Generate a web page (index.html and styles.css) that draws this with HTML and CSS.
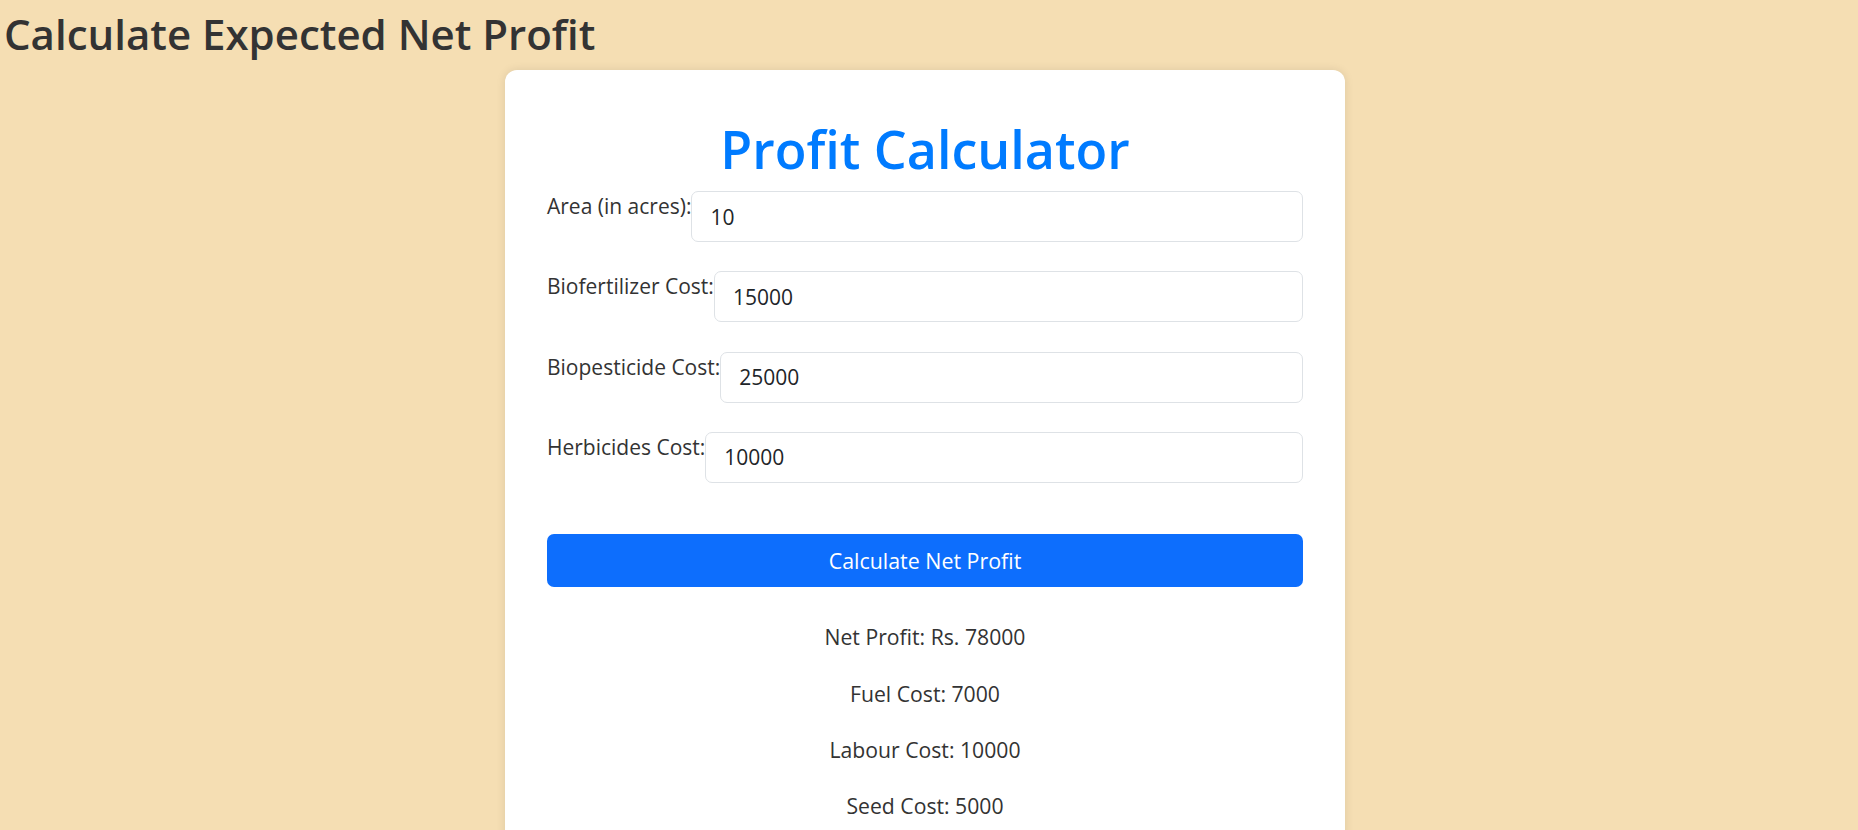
FILE: index.html
```html
<!DOCTYPE html>
<html lang="en">
<head>
<meta charset="utf-8">
<title>Calculate Expected Net Profit</title>
<link rel="stylesheet" href="styles.css">
</head>
<body>
<div class="page">
  <h1 class="page-title">Calculate Expected Net Profit</h1>
  <div class="card">
    <h2 class="card-title">Profit Calculator</h2>
    <form class="calc-form">
      <div class="field">
        <label class="field-label" for="area">Area (in acres):</label>
        <input class="field-input" id="area" type="text" value="10">
      </div>
      <div class="field">
        <label class="field-label" for="bioF">Biofertilizer Cost:</label>
        <input class="field-input" id="bioF" type="text" value="15000">
      </div>
      <div class="field">
        <label class="field-label" for="bioP">Biopesticide Cost:</label>
        <input class="field-input" id="bioP" type="text" value="25000">
      </div>
      <div class="field">
        <label class="field-label" for="herb">Herbicides Cost:</label>
        <input class="field-input" id="herb" type="text" value="10000">
      </div>
      <button class="calc-btn" type="button">Calculate Net Profit</button>
    </form>
    <div class="results">
      <p class="result">Net Profit: Rs. 78000</p>
      <p class="result">Fuel Cost: 7000</p>
      <p class="result">Labour Cost: 10000</p>
      <p class="result">Seed Cost: 5000</p>
    </div>
  </div>
</div>
</body>
</html>
```

FILE: styles.css
```css
html, body {
  margin: 0;
  padding: 0;
  overflow: hidden;
}

body {
  background: #f5deb3;
  font-family: "Open Sans", "Noto Sans", sans-serif;
  color: #333333;
}

.page {
  padding-right: 8px;
}

.page-title {
  margin: 9px 0 11px 4px;
  font-size: 42px;
  line-height: 1.2;
  font-weight: 600;
  color: #333333;
}

.card {
  box-sizing: border-box;
  width: 840px;
  margin: 0 auto;
  padding: 47.6px 42px 40px;
  background: #ffffff;
  border-radius: 12px;
  box-shadow: 0 0 10px rgba(0, 0, 0, 0.1);
}

.card-title {
  margin: 0 0 10.7px;
  text-align: center;
  font-size: 52px;
  line-height: 1.2;
  font-weight: 600;
  color: #007bff;
}

.calc-form {
  display: flex;
  flex-direction: column;
  gap: 29.3px;
}

.field {
  display: flex;
  align-items: flex-start;
}

.field-label {
  font-size: 21px;
  line-height: 1.5;
  color: #333333;
  white-space: nowrap;
}

.field-input {
  flex: 1;
  box-sizing: border-box;
  height: 51px;
  padding: 0 18px;
  border: 1px solid #dee2e6;
  border-radius: 7px;
  font-family: inherit;
  font-size: 21px;
  color: #212529;
  background: #ffffff;
  outline: none;
}

.calc-btn {
  margin-top: 22px;
  height: 53px;
  width: 100%;
  border: none;
  border-radius: 7px;
  background: #0d6efd;
  color: #ffffff;
  font-family: inherit;
  font-size: 21.4px;
  cursor: pointer;
}

.results {
  margin-top: 34px;
  display: flex;
  flex-direction: column;
  gap: 24.6px;
  text-align: center;
}

.result {
  margin: 0;
  font-size: 21.2px;
  line-height: 1.5;
  color: #333333;
}
```
